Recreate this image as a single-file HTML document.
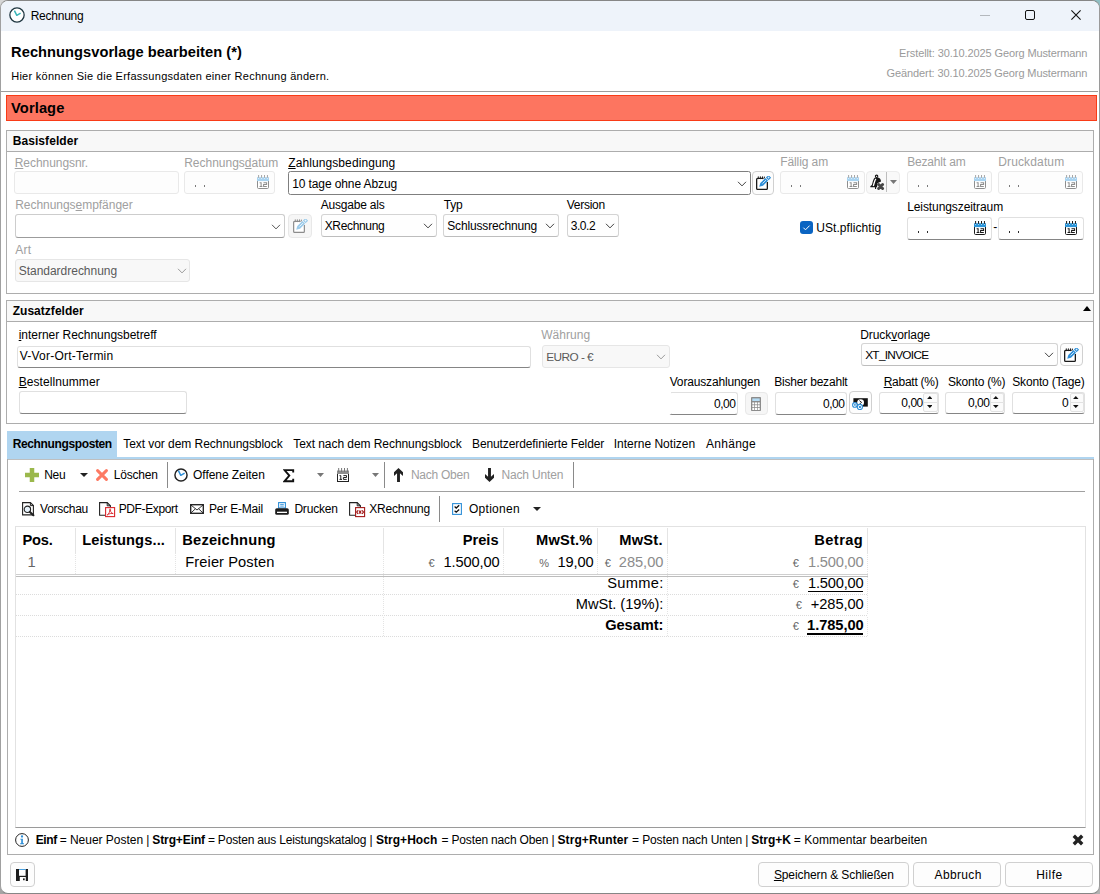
<!DOCTYPE html>
<html><head><meta charset="utf-8"><title>Rechnung</title>
<style>
html,body{margin:0;padding:0;}
body{width:1100px;height:894px;overflow:hidden;background:#8c8f90;font-family:"Liberation Sans", sans-serif;position:relative;}
#win{position:absolute;left:0;top:0;width:1100px;height:894px;box-sizing:border-box;border:1px solid #868686;border-left-color:#a0a0a0;border-right-color:#9a9a9a;border-radius:8px;background:#fff;overflow:hidden;}
#c{position:absolute;left:-1px;top:-1px;width:1100px;height:894px;}
#c div,#c svg{position:absolute;box-sizing:border-box;}
.t{position:absolute;white-space:nowrap;line-height:normal;font-family:"Liberation Sans", sans-serif;}
u{text-decoration-thickness:1px;text-underline-offset:1px;}
</style></head><body>
<div style="position:absolute;left:0;top:0;width:9px;height:9px;background:#d6d6d6"></div><div style="position:absolute;right:0;top:0;width:9px;height:9px;background:#8fbfc4"></div><div style="position:absolute;left:0;bottom:0;width:9px;height:9px;background:#a4a4a4"></div><div style="position:absolute;right:0;bottom:0;width:9px;height:9px;background:#b2b2b2"></div>
<div id="win"><div id="c">
<div style="left:0px;top:0px;width:1100px;height:31px;background:#eef3fa;"></div>
<svg style="left:9px;top:7px" width="16" height="16" viewBox="0 0 16 16"><circle cx="8.0" cy="8.0" r="7.1499999999999995" fill="#fff" stroke="#1f3640" stroke-width="1.3"/><path d="M5.4 3.5999999999999996 L7.8 8.3 L11.6 6.1" fill="none" stroke="#3ab5b8" stroke-width="1.5" stroke-linejoin="round"/></svg>
<div style="left:980px;top:15px;width:10px;height:1px;background:#b4b8bd;"></div>
<div style="left:1025px;top:10px;width:10px;height:10px;border:1px solid #111;border-radius:2px;"></div>
<svg style="left:1071px;top:10px" width="10" height="10" viewBox="0 0 10 10"><path d="M0.4 0.4 L9.6 9.6 M9.6 0.4 L0.4 9.6" stroke="#111" stroke-width="1.1"/></svg>
<div style="left:1px;top:91px;width:1097px;height:1px;background:#9d9d9d;"></div>
<div style="left:6px;top:95px;width:1091px;height:26px;border:1px solid #f93b17;background:#fd7560;"></div>
<div style="left:6px;top:130px;width:1088px;height:164px;border:1px solid #adadad;background:#fff;"></div>
<div style="left:7px;top:131px;width:1086px;height:20px;background:#f8f8f8;"></div>
<div style="left:7px;top:151px;width:1086px;height:1px;background:#adadad;"></div>
<div style="left:14px;top:171px;width:165px;height:23px;border:1px solid #e9e9e9;border-radius:3px;background:#fdfdfd;"></div>
<div style="left:184px;top:171px;width:91px;height:23px;border:1px solid #e9e9e9;border-radius:3px;background:#fdfdfd;"></div>
<svg style="left:257px;top:175px" width="12" height="14" viewBox="0 0 12 14"><path d="M0.5 6 V12.4 Q0.5 13.5 1.6 13.5 H10.4 Q11.5 13.5 11.5 12.4 V6" fill="#fff" stroke="#8e8e8e" stroke-width="1"/><rect x="0" y="2.2" width="12" height="3.9" fill="#a9d3f0"/><path d="M1.6 0 V2.9 M4.55 0 V2.9 M7.5 0 V2.9 M10.45 0 V2.9" stroke="#a6a6a6" stroke-width="1"/><path d="M1.6 2.9 V3.9 M4.55 2.9 V3.9 M7.5 2.9 V3.9 M10.45 2.9 V3.9" stroke="#fff" stroke-width="0.9" opacity="0.75"/><path d="M2.6 7.7 H4.1 V11.4 M2.6 11.5 H5.4 M6.5 7.7 H9.6 V9.5 H6.6 V11.5 H9.8" fill="none" stroke="#8e8e8e" stroke-width="1.05"/></svg>
<div style="left:288px;top:171px;width:463px;height:24px;border:1px solid #7f7f7f;border-radius:2.5px;background:#fff;"></div>
<svg style="left:737px;top:181px" width="10" height="6" viewBox="0 0 10 6"><path d="M1 0.8 L5 4.9 L9 0.8" fill="none" stroke="#444" stroke-width="1"/></svg>
<div style="left:752px;top:171px;width:22px;height:24px;border:1px solid #d0d0d0;border-radius:4px;background:#fdfdfd;"></div>
<svg style="left:756px;top:176.2px" width="16" height="15" viewBox="0 0 16 15"><path d="M7.6 2.4 H1.6 Q0.65 2.4 0.65 3.4 V12.4 Q0.65 13.3 1.6 13.3 H10.4 Q11.35 13.3 11.35 12.4 V5.9" fill="#fff" stroke="#1a1a1a" stroke-width="1.3"/><path d="M2.3 0.4 V3.1 M4.4 0.4 V3.1 M6.5 0.4 V3.1 M8.4 0.6 V2.4" stroke="#1a1a1a" stroke-width="0.95"/><g transform="translate(3.2 10.7) rotate(-44.2)"><path d="M0 0 L3.4 -1.9 H10.5 V1.9 H3.4 Z" fill="#2f8fd8"/><rect x="11.2" y="-1.9" width="3.6" height="3.8" fill="#2f8fd8"/><rect x="12.3" y="-0.75" width="1.5" height="1.5" fill="#fff" opacity="0.85"/><path d="M4.6 0 H9.4" stroke="#fff" stroke-width="0.8" opacity="0.9"/></g></svg>
<div style="left:780px;top:171px;width:85px;height:23px;border:1px solid #e9e9e9;border-radius:3px;background:#fdfdfd;"></div>
<svg style="left:847px;top:175px" width="12" height="14" viewBox="0 0 12 14"><path d="M0.5 6 V12.4 Q0.5 13.5 1.6 13.5 H10.4 Q11.5 13.5 11.5 12.4 V6" fill="#fff" stroke="#8e8e8e" stroke-width="1"/><rect x="0" y="2.2" width="12" height="3.9" fill="#a9d3f0"/><path d="M1.6 0 V2.9 M4.55 0 V2.9 M7.5 0 V2.9 M10.45 0 V2.9" stroke="#a6a6a6" stroke-width="1"/><path d="M1.6 2.9 V3.9 M4.55 2.9 V3.9 M7.5 2.9 V3.9 M10.45 2.9 V3.9" stroke="#fff" stroke-width="0.9" opacity="0.75"/><path d="M2.6 7.7 H4.1 V11.4 M2.6 11.5 H5.4 M6.5 7.7 H9.6 V9.5 H6.6 V11.5 H9.8" fill="none" stroke="#8e8e8e" stroke-width="1.05"/></svg>
<div style="left:866px;top:171px;width:34px;height:23px;border:1px solid #ececec;border-radius:4px;background:#f9f9f9;"></div>
<div style="left:886px;top:172px;width:1px;height:20px;background:#bdbdbd;"></div>
<svg style="left:870px;top:174px" width="15" height="17" viewBox="0 0 15 17"><path d="M5.1 3.5 C3.0 4.6 2.8 8.4 1.8 11 L0.3 12.2 V13.3 H7 L7.4 9.2 L11 7.6 C10.9 5.4 9.8 3.9 8 3.5 Z" fill="#161616"/><path d="M5.9 4.9 C4.5 6.4 4.3 9 3.3 12" stroke="#fff" stroke-width="1.35" fill="none"/><circle cx="6.6" cy="2.3" r="1.2" fill="#fff" stroke="#161616" stroke-width="1.1"/><rect x="5" y="13" width="1.1" height="2" fill="#161616"/><path d="M8.6 10.5 L12.6 14.5 M12.6 10.5 L8.6 14.5" stroke="#474747" stroke-width="3" stroke-linecap="round"/></svg>
<svg style="left:890px;top:180px" width="7" height="4" viewBox="0 0 7 4"><path d="M0 0 H7 L3.5 4 Z" fill="#777"/></svg>
<div style="left:907px;top:171px;width:85px;height:22px;border:1px solid #e9e9e9;border-radius:3px;background:#fdfdfd;"></div>
<svg style="left:974px;top:174.5px" width="12" height="14" viewBox="0 0 12 14"><path d="M0.5 6 V12.4 Q0.5 13.5 1.6 13.5 H10.4 Q11.5 13.5 11.5 12.4 V6" fill="#fff" stroke="#8e8e8e" stroke-width="1"/><rect x="0" y="2.2" width="12" height="3.9" fill="#a9d3f0"/><path d="M1.6 0 V2.9 M4.55 0 V2.9 M7.5 0 V2.9 M10.45 0 V2.9" stroke="#a6a6a6" stroke-width="1"/><path d="M1.6 2.9 V3.9 M4.55 2.9 V3.9 M7.5 2.9 V3.9 M10.45 2.9 V3.9" stroke="#fff" stroke-width="0.9" opacity="0.75"/><path d="M2.6 7.7 H4.1 V11.4 M2.6 11.5 H5.4 M6.5 7.7 H9.6 V9.5 H6.6 V11.5 H9.8" fill="none" stroke="#8e8e8e" stroke-width="1.05"/></svg>
<div style="left:998px;top:171px;width:85px;height:23px;border:1px solid #e9e9e9;border-radius:3px;background:#fdfdfd;"></div>
<svg style="left:1065px;top:175px" width="12" height="14" viewBox="0 0 12 14"><path d="M0.5 6 V12.4 Q0.5 13.5 1.6 13.5 H10.4 Q11.5 13.5 11.5 12.4 V6" fill="#fff" stroke="#8e8e8e" stroke-width="1"/><rect x="0" y="2.2" width="12" height="3.9" fill="#a9d3f0"/><path d="M1.6 0 V2.9 M4.55 0 V2.9 M7.5 0 V2.9 M10.45 0 V2.9" stroke="#a6a6a6" stroke-width="1"/><path d="M1.6 2.9 V3.9 M4.55 2.9 V3.9 M7.5 2.9 V3.9 M10.45 2.9 V3.9" stroke="#fff" stroke-width="0.9" opacity="0.75"/><path d="M2.6 7.7 H4.1 V11.4 M2.6 11.5 H5.4 M6.5 7.7 H9.6 V9.5 H6.6 V11.5 H9.8" fill="none" stroke="#8e8e8e" stroke-width="1.05"/></svg>
<div style="left:195px;top:185px;width:1.2px;height:2px;background:#7a7a7a;"></div>
<div style="left:204px;top:185px;width:1.2px;height:2px;background:#7a7a7a;"></div>
<div style="left:791px;top:185px;width:1.2px;height:2px;background:#7a7a7a;"></div>
<div style="left:800px;top:185px;width:1.2px;height:2px;background:#7a7a7a;"></div>
<div style="left:918px;top:184.5px;width:1.2px;height:2px;background:#7a7a7a;"></div>
<div style="left:927px;top:184.5px;width:1.2px;height:2px;background:#7a7a7a;"></div>
<div style="left:1009px;top:185px;width:1.2px;height:2px;background:#7a7a7a;"></div>
<div style="left:1018px;top:185px;width:1.2px;height:2px;background:#7a7a7a;"></div>
<div style="left:15px;top:214px;width:270px;height:24px;border:1px solid #cdcdcd;border-bottom-color:#9c9c9c;border-radius:3px;background:#fff;"></div>
<svg style="left:271px;top:224px" width="10" height="6" viewBox="0 0 10 6"><path d="M1 0.8 L5 4.9 L9 0.8" fill="none" stroke="#555" stroke-width="1"/></svg>
<div style="left:288px;top:214px;width:24px;height:24px;border:1px solid #e8e8e8;border-radius:4px;background:#f6f6f6;"></div>
<svg style="left:293px;top:219px" width="16" height="15" viewBox="0 0 16 15"><path d="M7.6 2.4 H1.6 Q0.65 2.4 0.65 3.4 V12.4 Q0.65 13.3 1.6 13.3 H10.4 Q11.35 13.3 11.35 12.4 V5.9" fill="#fff" stroke="#8c8c8c" stroke-width="1.2"/><path d="M2.3 0.4 V3.1 M4.4 0.4 V3.1 M6.5 0.4 V3.1 M8.4 0.6 V2.4" stroke="#8c8c8c" stroke-width="0.95"/><g transform="translate(3.2 10.7) rotate(-44.2)"><path d="M0 0 L3.4 -1.9 H10.5 V1.9 H3.4 Z" fill="#9ccbea"/><rect x="11.2" y="-1.9" width="3.6" height="3.8" fill="#9ccbea"/><rect x="12.3" y="-0.75" width="1.5" height="1.5" fill="#fff" opacity="0.85"/><path d="M4.6 0 H9.4" stroke="#fff" stroke-width="0.8" opacity="0.9"/></g></svg>
<div style="left:321px;top:214px;width:116px;height:23px;border:1px solid #d4d4d4;border-bottom-color:#bdbdbd;border-radius:3px;background:#fefefe;"></div>
<svg style="left:423px;top:223px" width="10" height="6" viewBox="0 0 10 6"><path d="M1 0.8 L5 4.9 L9 0.8" fill="none" stroke="#444" stroke-width="1"/></svg>
<div style="left:443px;top:214px;width:116px;height:23px;border:1px solid #d4d4d4;border-bottom-color:#bdbdbd;border-radius:3px;background:#fefefe;"></div>
<svg style="left:545px;top:223px" width="10" height="6" viewBox="0 0 10 6"><path d="M1 0.8 L5 4.9 L9 0.8" fill="none" stroke="#444" stroke-width="1"/></svg>
<div style="left:567px;top:214px;width:52px;height:23px;border:1px solid #d4d4d4;border-bottom-color:#bdbdbd;border-radius:3px;background:#fefefe;"></div>
<svg style="left:605px;top:223px" width="10" height="6" viewBox="0 0 10 6"><path d="M1 0.8 L5 4.9 L9 0.8" fill="none" stroke="#444" stroke-width="1"/></svg>
<div style="left:800px;top:221px;width:13px;height:13px;background:#0a64c2;border-radius:3px;"></div>
<svg style="left:800px;top:221px" width="13" height="13" viewBox="0 0 13 13"><path d="M3.4 6.7 L5.5 8.8 L9.6 4.6" fill="none" stroke="#fff" stroke-width="1"/></svg>
<div style="left:907px;top:217px;width:85px;height:23px;border:1px solid #e0e0e0;border-bottom-color:#858585;border-radius:3px;background:#fff;"></div>
<svg style="left:974px;top:221px" width="12" height="14" viewBox="0 0 12 14"><path d="M0.5 6 V12.4 Q0.5 13.5 1.6 13.5 H10.4 Q11.5 13.5 11.5 12.4 V6" fill="#fff" stroke="#1a1a1a" stroke-width="1"/><rect x="0" y="2.2" width="12" height="3.9" fill="#2b95d9"/><path d="M1.6 0 V2.9 M4.55 0 V2.9 M7.5 0 V2.9 M10.45 0 V2.9" stroke="#1a1a1a" stroke-width="1"/><path d="M1.6 2.9 V3.9 M4.55 2.9 V3.9 M7.5 2.9 V3.9 M10.45 2.9 V3.9" stroke="#fff" stroke-width="0.9" opacity="0.75"/><path d="M2.6 7.7 H4.1 V11.4 M2.6 11.5 H5.4 M6.5 7.7 H9.6 V9.5 H6.6 V11.5 H9.8" fill="none" stroke="#1a1a1a" stroke-width="1.05"/></svg>
<div style="left:998px;top:217px;width:86px;height:23px;border:1px solid #e0e0e0;border-bottom-color:#858585;border-radius:3px;background:#fff;"></div>
<svg style="left:1065px;top:221px" width="12" height="14" viewBox="0 0 12 14"><path d="M0.5 6 V12.4 Q0.5 13.5 1.6 13.5 H10.4 Q11.5 13.5 11.5 12.4 V6" fill="#fff" stroke="#1a1a1a" stroke-width="1"/><rect x="0" y="2.2" width="12" height="3.9" fill="#2b95d9"/><path d="M1.6 0 V2.9 M4.55 0 V2.9 M7.5 0 V2.9 M10.45 0 V2.9" stroke="#1a1a1a" stroke-width="1"/><path d="M1.6 2.9 V3.9 M4.55 2.9 V3.9 M7.5 2.9 V3.9 M10.45 2.9 V3.9" stroke="#fff" stroke-width="0.9" opacity="0.75"/><path d="M2.6 7.7 H4.1 V11.4 M2.6 11.5 H5.4 M6.5 7.7 H9.6 V9.5 H6.6 V11.5 H9.8" fill="none" stroke="#1a1a1a" stroke-width="1.05"/></svg>
<div style="left:918px;top:231px;width:1.2px;height:2px;background:#2a2a2a;"></div>
<div style="left:927px;top:231px;width:1.2px;height:2px;background:#2a2a2a;"></div>
<div style="left:1009px;top:231px;width:1.2px;height:2px;background:#2a2a2a;"></div>
<div style="left:1018px;top:231px;width:1.2px;height:2px;background:#2a2a2a;"></div>
<div style="left:15px;top:259px;width:175px;height:23px;border:1px solid #e6e6e6;border-radius:3px;background:#f8f8f8;"></div>
<svg style="left:177px;top:268px" width="10" height="6" viewBox="0 0 10 6"><path d="M1 0.8 L5 4.9 L9 0.8" fill="none" stroke="#9a9a9a" stroke-width="1"/></svg>
<div style="left:6px;top:300px;width:1088px;height:124px;border:1px solid #adadad;background:#fff;"></div>
<div style="left:7px;top:301px;width:1086px;height:20px;background:#f8f8f8;"></div>
<div style="left:7px;top:321px;width:1086px;height:1px;background:#adadad;"></div>
<svg style="left:1083px;top:306px" width="8" height="5" viewBox="0 0 8 5"><path d="M0 5 H8 L4.0 0 Z" fill="#000"/></svg>
<div style="left:17px;top:346px;width:514px;height:22px;border:1px solid #e0e0e0;border-bottom-color:#858585;border-radius:3px;background:#fff;"></div>
<div style="left:542px;top:345px;width:128px;height:23px;border:1px solid #e6e6e6;border-radius:3px;background:#f8f8f8;"></div>
<svg style="left:656px;top:354px" width="10" height="6" viewBox="0 0 10 6"><path d="M1 0.8 L5 4.9 L9 0.8" fill="none" stroke="#9a9a9a" stroke-width="1"/></svg>
<div style="left:861px;top:343px;width:197px;height:23px;border:1px solid #d4d4d4;border-bottom-color:#bdbdbd;border-radius:3px;background:#fefefe;"></div>
<svg style="left:1044px;top:352px" width="10" height="6" viewBox="0 0 10 6"><path d="M1 0.8 L5 4.9 L9 0.8" fill="none" stroke="#444" stroke-width="1"/></svg>
<div style="left:1060px;top:343px;width:23px;height:23px;border:1px solid #d0d0d0;border-radius:4px;background:#fdfdfd;"></div>
<svg style="left:1064px;top:348.4px" width="16" height="15" viewBox="0 0 16 15"><path d="M7.6 2.4 H1.6 Q0.65 2.4 0.65 3.4 V12.4 Q0.65 13.3 1.6 13.3 H10.4 Q11.35 13.3 11.35 12.4 V5.9" fill="#fff" stroke="#1a1a1a" stroke-width="1.3"/><path d="M2.3 0.4 V3.1 M4.4 0.4 V3.1 M6.5 0.4 V3.1 M8.4 0.6 V2.4" stroke="#1a1a1a" stroke-width="0.95"/><g transform="translate(3.2 10.7) rotate(-44.2)"><path d="M0 0 L3.4 -1.9 H10.5 V1.9 H3.4 Z" fill="#2f8fd8"/><rect x="11.2" y="-1.9" width="3.6" height="3.8" fill="#2f8fd8"/><rect x="12.3" y="-0.75" width="1.5" height="1.5" fill="#fff" opacity="0.85"/><path d="M4.6 0 H9.4" stroke="#fff" stroke-width="0.8" opacity="0.9"/></g></svg>
<div style="left:19px;top:391px;width:168px;height:23px;border:1px solid #e0e0e0;border-bottom-color:#858585;border-radius:3px;background:#fff;"></div>
<div style="left:669px;top:392px;width:69px;height:23px;border:1px solid #e0e0e0;border-bottom-color:#858585;border-radius:3px;background:#fff;"></div>
<div style="left:669px;top:392px;width:2px;height:22px;background:#fff;"></div>
<div style="left:745px;top:392px;width:23px;height:23px;border:1px solid #e8e8e8;border-radius:4px;background:#f6f6f6;"></div>
<svg style="left:751px;top:397px" width="10" height="14" viewBox="0 0 10 14"><rect x="0" y="0" width="10" height="14" rx="0.8" fill="#8c8c8c"/><rect x="1.3" y="1.4" width="7.4" height="2.6" fill="#b4dbf4"/><rect x="1.3" y="5.4" width="2" height="2" fill="#fff"/><rect x="4.0" y="5.4" width="2" height="2" fill="#fff"/><rect x="6.7" y="5.4" width="2" height="2" fill="#fff"/><rect x="1.3" y="8.2" width="2" height="2" fill="#fff"/><rect x="4.0" y="8.2" width="2" height="2" fill="#fff"/><rect x="6.7" y="8.2" width="2" height="2" fill="#fff"/><rect x="1.3" y="11.0" width="2" height="2" fill="#fff"/><rect x="4.0" y="11.0" width="2" height="2" fill="#fff"/><rect x="6.7" y="11.0" width="2" height="2" fill="#fff"/></svg>
<div style="left:775px;top:392px;width:72px;height:23px;border:1px solid #e0e0e0;border-bottom-color:#858585;border-radius:3px;background:#fff;"></div>
<div style="left:849px;top:391px;width:23px;height:23px;border:1px solid #d0d0d0;border-radius:4px;background:#fdfdfd;"></div>
<svg style="left:852px;top:398px" width="16" height="12" viewBox="0 0 16 12"><rect x="1.4" y="0.2" width="14.4" height="8.4" fill="#111"/><ellipse cx="8.6" cy="4.4" rx="3.4" ry="3.2" fill="#fff"/><path d="M7.4 2.6 L9.6 4.4 L7.4 6.2" stroke="#111" stroke-width="0.9" fill="none"/><circle cx="2.9" cy="6.9" r="2.3" fill="#fff" stroke="#2f8fd8" stroke-width="1.1"/><rect x="2.1" y="6.1" width="1.6" height="1.6" fill="#2f8fd8"/><circle cx="7.9" cy="9" r="2.6" fill="#fff" stroke="#2f8fd8" stroke-width="1.1"/><rect x="6.9" y="8" width="2" height="2" fill="#2f8fd8"/></svg>
<div style="left:879px;top:392px;width:60px;height:22px;border:1px solid #e0e0e0;border-bottom-color:#858585;border-radius:3px;background:#fff;"></div>
<div style="left:945px;top:392px;width:60px;height:22px;border:1px solid #e0e0e0;border-bottom-color:#858585;border-radius:3px;background:#fff;"></div>
<div style="left:1012px;top:392px;width:73px;height:22px;border:1px solid #e0e0e0;border-bottom-color:#858585;border-radius:3px;background:#fff;"></div>
<div style="left:923px;top:393px;width:14.5px;height:10px;border:1px solid #e2e2e2;background:#fbfbfb;border-radius:2px 2px 0 0;"></div>
<div style="left:923px;top:402px;width:14.5px;height:10px;border:1px solid #e2e2e2;background:#fbfbfb;border-radius:0 0 2px 2px;"></div>
<svg style="left:926.9px;top:395.7px" width="5.6" height="3.1" viewBox="0 0 5.6 3.1"><path d="M0 3.1 H5.6 L2.8 0 Z" fill="#111"/></svg>
<svg style="left:926.9px;top:405.3px" width="5.6" height="3.1" viewBox="0 0 5.6 3.1"><path d="M0 0 H5.6 L2.8 3.1 Z" fill="#111"/></svg>
<div style="left:989.5px;top:393px;width:14.5px;height:10px;border:1px solid #e2e2e2;background:#fbfbfb;border-radius:2px 2px 0 0;"></div>
<div style="left:989.5px;top:402px;width:14.5px;height:10px;border:1px solid #e2e2e2;background:#fbfbfb;border-radius:0 0 2px 2px;"></div>
<svg style="left:993.4px;top:395.7px" width="5.6" height="3.1" viewBox="0 0 5.6 3.1"><path d="M0 3.1 H5.6 L2.8 0 Z" fill="#111"/></svg>
<svg style="left:993.4px;top:405.3px" width="5.6" height="3.1" viewBox="0 0 5.6 3.1"><path d="M0 0 H5.6 L2.8 3.1 Z" fill="#111"/></svg>
<div style="left:1069.5px;top:393px;width:14.5px;height:10px;border:1px solid #e2e2e2;background:#fbfbfb;border-radius:2px 2px 0 0;"></div>
<div style="left:1069.5px;top:402px;width:14.5px;height:10px;border:1px solid #e2e2e2;background:#fbfbfb;border-radius:0 0 2px 2px;"></div>
<svg style="left:1073.4px;top:395.7px" width="5.6" height="3.1" viewBox="0 0 5.6 3.1"><path d="M0 3.1 H5.6 L2.8 0 Z" fill="#111"/></svg>
<svg style="left:1073.4px;top:405.3px" width="5.6" height="3.1" viewBox="0 0 5.6 3.1"><path d="M0 0 H5.6 L2.8 3.1 Z" fill="#111"/></svg>
<div style="left:7px;top:431px;width:110px;height:26px;background:#b0d5f0;"></div>
<div style="left:7px;top:457px;width:1087px;height:2px;background:#b0d5f0;"></div>
<div style="left:7px;top:459px;width:1087px;height:1px;background:#bfbfbf;"></div>
<div style="left:7px;top:459px;width:1px;height:396px;background:#adadad;"></div>
<div style="left:1093px;top:459px;width:1px;height:396px;background:#adadad;"></div>
<div style="left:7px;top:854px;width:1087px;height:1px;background:#adadad;"></div>
<svg style="left:25px;top:468px" width="14" height="14" viewBox="0 0 14 14"><path d="M7 0 V14 M0 7 H14" stroke="#9bb84c" stroke-width="4.5" stroke-linecap="butt" fill="none" transform="translate(0,0)"/></svg>
<svg style="left:96px;top:469px" width="12" height="12" viewBox="0 0 12 12"><path d="M1.6 1.6 L10.4 10.4 M10.4 1.6 L1.6 10.4" stroke="#fd7a63" stroke-width="3" stroke-linecap="round" fill="none"/></svg>
<svg style="left:80px;top:473px" width="8" height="4" viewBox="0 0 8 4"><path d="M0 0 H8 L4.0 4 Z" fill="#222"/></svg>
<div style="left:167px;top:462px;width:1px;height:26px;background:#8a8a8a;"></div>
<svg style="left:174px;top:468px" width="14" height="14" viewBox="0 0 14 14"><circle cx="7.0" cy="7.0" r="6.075" fill="#fff" stroke="#222" stroke-width="1.45"/><path d="M4.4 2.5999999999999996 L6.8 7.3 L10.6 5.1" fill="none" stroke="#2f8fd8" stroke-width="1.5" stroke-linejoin="round"/></svg>
<svg style="left:282.5px;top:468.5px" width="12" height="14" viewBox="0 0 12 14"><path d="M10.2 3.4 V1.1 H1.5 L6.3 6.6 L1.5 12.3 H10.2 V9.7" fill="none" stroke="#111" stroke-width="1.9" stroke-linejoin="miter"/></svg>
<svg style="left:317px;top:473px" width="7" height="4" viewBox="0 0 7 4"><path d="M0 0 H7 L3.5 4 Z" fill="#777"/></svg>
<svg style="left:337px;top:468px" width="12" height="14" viewBox="0 0 12 14"><rect x="0.5" y="5.5" width="11" height="8" fill="#fff" stroke="#222" stroke-width="1"/><rect x="0" y="2.5" width="12" height="3.5" fill="#8e8e8e"/><path d="M1.7 0 V4 M4.6 0 V4 M7.5 0 V4 M10.4 0 V4" stroke="#777" stroke-width="1"/><path d="M2.5 7.6 H3.8 V11.4 M2.5 11.4 H5 M6.4 7.6 H9.5 V9.5 H6.4 V11.4 H9.7" fill="none" stroke="#222" stroke-width="1"/></svg>
<svg style="left:372px;top:473px" width="7" height="4" viewBox="0 0 7 4"><path d="M0 0 H7 L3.5 4 Z" fill="#777"/></svg>
<div style="left:384px;top:462px;width:1px;height:26px;background:#8a8a8a;"></div>
<svg style="left:394px;top:468px" width="9" height="14" viewBox="0 0 9 14"><g><path d="M4.5 0 L9 4.3 V8 L5.95 5.35 V13.9 H3.05 V5.35 L0 8 V4.3 Z" fill="#222"/></g></svg>
<svg style="left:485px;top:468px" width="9" height="14" viewBox="0 0 9 14"><g transform="rotate(180 4.5 7)"><path d="M4.5 0 L9 4.3 V8 L5.95 5.35 V13.9 H3.05 V5.35 L0 8 V4.3 Z" fill="#222"/></g></svg>
<div style="left:573px;top:462px;width:1px;height:26px;background:#8a8a8a;"></div>
<div style="left:19px;top:491px;width:1066px;height:1px;background:#a0a0a0;"></div>
<svg style="left:21.7px;top:502px" width="13" height="15" viewBox="0 0 13 15"><path d="M0.6 0.6 H8.4 L11.4 3.6 V12.9 H0.6 Z" fill="#fff" stroke="#222" stroke-width="1.1"/><path d="M8.4 0.6 V3.6 H11.4" fill="none" stroke="#222" stroke-width="1"/><circle cx="5.4" cy="7.3" r="3.2" fill="#e6f2fb" stroke="#222" stroke-width="1.1"/><path d="M7.9 9.9 L11.4 13.2" stroke="#222" stroke-width="2.1" stroke-linecap="round"/></svg>
<svg style="left:98.7px;top:502px" width="17" height="16" viewBox="0 0 17 16"><path d="M0.6 0.6 H8.2 L11.4 3.8 V13.2 H0.6 Z" fill="#fff" stroke="#222" stroke-width="1.1"/><path d="M8.2 0.6 V3.8 H11.4" fill="none" stroke="#222" stroke-width="1"/><rect x="6.6" y="5.6" width="9" height="9" fill="#fff" stroke="#d9262c" stroke-width="1.1"/><path d="M8.2 13 C10 11.8 11 9.6 10.7 7.4 C10.5 6.6 11.8 6.6 11.5 7.8 C11.2 9.8 12.6 11.4 14.2 11.6 C13 11 10 11.6 8.2 13 Z" fill="none" stroke="#d9262c" stroke-width="0.9"/></svg>
<svg style="left:190px;top:504px" width="14" height="10" viewBox="0 0 14 10"><rect x="0.7" y="0.7" width="12.6" height="8.6" fill="#fff" stroke="#222" stroke-width="1.35"/><path d="M0.8 0.9 L7 6 L13.2 0.9 M0.8 9.1 L5.4 4.8 M13.2 9.1 L8.6 4.8" fill="none" stroke="#222" stroke-width="0.9"/></svg>
<svg style="left:275px;top:502px" width="14" height="13" viewBox="0 0 14 13"><rect x="3.6" y="0.6" width="6.8" height="5.4" fill="#fff" stroke="#2f8fd8" stroke-width="1.1"/><path d="M5.2 2.4 H8.8 M5.2 4.1 H8.8" stroke="#2f8fd8" stroke-width="0.9"/><rect x="0.2" y="6.2" width="13.6" height="6.6" rx="1.6" fill="#1c1c1c"/><rect x="2" y="9.7" width="10" height="1.3" fill="#fff"/></svg>
<svg style="left:348.7px;top:502px" width="17" height="16" viewBox="0 0 17 16"><path d="M0.6 0.6 H8.2 L11.4 3.8 V13.2 H0.6 Z" fill="#fff" stroke="#222" stroke-width="1.1"/><path d="M8.2 0.6 V3.8 H11.4" fill="none" stroke="#222" stroke-width="1"/><rect x="6.6" y="5.6" width="9" height="9" fill="#fff" stroke="#a31919" stroke-width="1.1"/><path d="M9 8.3 L7.7 10.1 L9 11.9 M13.2 8.3 L14.5 10.1 L13.2 11.9 M9.9 8.5 L12.3 11.7 M12.3 8.5 L9.9 11.7" fill="none" stroke="#a31919" stroke-width="1.15"/></svg>
<svg style="left:452px;top:503px" width="10" height="12" viewBox="0 0 10 12"><rect x="0.6" y="0.6" width="8.8" height="10.8" fill="#fff" stroke="#2f8fd8" stroke-width="1.1"/><path d="M2.6 3.6 L4.2 5 L7.2 2.2 M2.6 7.8 L4.2 9.2 L7.2 6.4" fill="none" stroke="#111" stroke-width="1.3"/></svg>
<div style="left:439px;top:496px;width:1px;height:26px;background:#8a8a8a;"></div>
<svg style="left:533px;top:507px" width="8" height="4" viewBox="0 0 8 4"><path d="M0 0 H8 L4.0 4 Z" fill="#222"/></svg>
<div style="left:15px;top:526px;width:1071px;height:302px;border:1px solid #e2e2e2;border-bottom-color:#9a9a9a;background:#fff;"></div>
<div style="left:75px;top:528px;width:1px;height:25px;background:#e4e4e4;"></div>
<div style="left:75px;top:553px;width:1px;height:21px;background:repeating-linear-gradient(to bottom,#e4e4e4 0 1px,#fff 1px 2px);"></div>
<div style="left:175px;top:528px;width:1px;height:25px;background:#e4e4e4;"></div>
<div style="left:175px;top:553px;width:1px;height:21px;background:repeating-linear-gradient(to bottom,#e4e4e4 0 1px,#fff 1px 2px);"></div>
<div style="left:383px;top:528px;width:1px;height:25px;background:#e4e4e4;"></div>
<div style="left:383px;top:553px;width:1px;height:84px;background:repeating-linear-gradient(to bottom,#e4e4e4 0 1px,#fff 1px 2px);"></div>
<div style="left:503px;top:528px;width:1px;height:25px;background:#e4e4e4;"></div>
<div style="left:503px;top:553px;width:1px;height:21px;background:repeating-linear-gradient(to bottom,#e4e4e4 0 1px,#fff 1px 2px);"></div>
<div style="left:597px;top:528px;width:1px;height:25px;background:#e4e4e4;"></div>
<div style="left:597px;top:553px;width:1px;height:21px;background:repeating-linear-gradient(to bottom,#e4e4e4 0 1px,#fff 1px 2px);"></div>
<div style="left:667px;top:528px;width:1px;height:25px;background:#e4e4e4;"></div>
<div style="left:667px;top:553px;width:1px;height:84px;background:repeating-linear-gradient(to bottom,#e4e4e4 0 1px,#fff 1px 2px);"></div>
<div style="left:867px;top:528px;width:1px;height:25px;background:#e4e4e4;"></div>
<div style="left:867px;top:553px;width:1px;height:84px;background:repeating-linear-gradient(to bottom,#e4e4e4 0 1px,#fff 1px 2px);"></div>
<div style="left:16px;top:574px;width:852px;height:1px;background:#cfcfcf;"></div>
<div style="left:16px;top:576px;width:852px;height:1px;background:#bdbdbd;"></div>
<div style="left:16px;top:594px;width:852px;height:1px;background:repeating-linear-gradient(to right,#dcdcdc 0 1px,#fff 1px 2px);"></div>
<div style="left:16px;top:615px;width:852px;height:1px;background:repeating-linear-gradient(to right,#dcdcdc 0 1px,#fff 1px 2px);"></div>
<div style="left:16px;top:636px;width:852px;height:1px;background:repeating-linear-gradient(to right,#dcdcdc 0 1px,#fff 1px 2px);"></div>
<div style="left:808px;top:591px;width:55px;height:1px;background:#000;"></div>
<div style="left:807px;top:633px;width:56px;height:2px;background:#000;"></div>
<svg style="left:15px;top:833px" width="14" height="14" viewBox="0 0 14 14"><circle cx="7" cy="7" r="6.4" fill="#fff" stroke="#222" stroke-width="1"/><circle cx="7" cy="3.5" r="1.15" fill="#2f8fd8"/><path d="M5.2 5.7 H7.9 V10.3 H9 V11.2 H5.1 V10.3 H6.2 V6.6 H5.2 Z" fill="#2f8fd8"/></svg>
<svg style="left:1072px;top:834px" width="12" height="12" viewBox="0 0 12 12"><path d="M1.8 1.8 L10.2 10.2 M10.2 1.8 L1.8 10.2" stroke="#222" stroke-width="3.4" stroke-linecap="butt" fill="none"/></svg>
<div style="left:10px;top:862px;width:25px;height:25px;border:1px solid #d0d0d0;border-radius:4px;background:#fdfdfd;"></div>
<svg style="left:16px;top:869px" width="12" height="12" viewBox="0 0 12 12"><rect x="0" y="0" width="12" height="12" fill="#1c1c1c"/><rect x="3" y="0" width="6.6" height="6.8" fill="#fdfdfd"/><rect x="3" y="0" width="6.6" height="0.9" fill="#3a9ae0"/><rect x="3.8" y="8" width="6" height="4" fill="#fdfdfd"/><rect x="7" y="9.4" width="1.7" height="1.8" fill="#1c1c1c"/></svg>
<div style="left:758px;top:862px;width:151px;height:25px;border:1px solid #d0d0d0;border-radius:4px;background:#fdfdfd;"></div>
<div style="left:913px;top:862px;width:88px;height:25px;border:1px solid #d0d0d0;border-radius:4px;background:#fdfdfd;"></div>
<div style="left:1005px;top:862px;width:88px;height:25px;border:1px solid #d0d0d0;border-radius:4px;background:#fdfdfd;"></div>
<span class="t" style="top:9px;font-size:12px;letter-spacing:-0.246px;left:30.7px;">Rechnung</span>
<span class="t" style="top:44px;font-size:14.67px;font-weight:700;letter-spacing:0.035px;left:11.1px;">Rechnungsvorlage bearbeiten (*)</span>
<span class="t" style="top:70px;font-size:11px;letter-spacing:0.267px;left:11.2px;">Hier können Sie die Erfassungsdaten einer Rechnung ändern.</span>
<span class="t" style="top:47px;font-size:11px;color:#9a9a9a;letter-spacing:-0.116px;left:899.07px;">Erstellt: 30.10.2025 Georg Mustermann</span>
<span class="t" style="top:67px;font-size:11px;color:#9a9a9a;letter-spacing:-0.11px;left:886.6px;">Geändert: 30.10.2025 Georg Mustermann</span>
<span class="t" style="top:100px;font-size:14.67px;font-weight:700;letter-spacing:0.092px;left:11.1px;">Vorlage</span>
<span class="t" style="top:134px;font-size:12px;font-weight:700;letter-spacing:0.08px;left:12.7px;">Basisfelder</span>
<span class="t" style="top:156px;font-size:12px;color:#a0a0a0;letter-spacing:-0.051px;left:14.7px;"><u>R</u>echnungsnr.</span>
<span class="t" style="top:156px;font-size:12px;color:#a0a0a0;letter-spacing:-0.007px;left:184.2px;">Rechnungs<u>d</u>atum</span>
<span class="t" style="top:156px;font-size:12px;letter-spacing:0.098px;left:288.2px;"><u>Z</u>ahlungsbedingung</span>
<span class="t" style="top:177px;font-size:12px;letter-spacing:-0.104px;left:292.2px;">10 tage ohne Abzug</span>
<span class="t" style="top:155px;font-size:12px;color:#a0a0a0;letter-spacing:-0.086px;left:780.2px;">Fällig am</span>
<span class="t" style="top:155px;font-size:12px;color:#a0a0a0;letter-spacing:-0.17px;left:907.2px;">Bezahlt am</span>
<span class="t" style="top:155px;font-size:12px;color:#a0a0a0;letter-spacing:0.146px;left:998.2px;">Druckdatum</span>
<span class="t" style="top:198px;font-size:12px;color:#a0a0a0;letter-spacing:-0.036px;left:15.2px;">Rechnungs<u>e</u>mpfänger</span>
<span class="t" style="top:198px;font-size:12px;letter-spacing:-0.205px;left:320.7px;">Ausgabe als</span>
<span class="t" style="top:219px;font-size:12px;letter-spacing:-0.34px;left:324.7px;">XRechnung</span>
<span class="t" style="top:198px;font-size:12px;letter-spacing:-0.172px;left:443.7px;">Typ</span>
<span class="t" style="top:219px;font-size:12px;letter-spacing:-0.147px;left:447.2px;">Schlussrechnung</span>
<span class="t" style="top:198px;font-size:12px;letter-spacing:-0.255px;left:566.7px;">Version</span>
<span class="t" style="top:219px;font-size:12px;letter-spacing:-0.426px;left:570.7px;">3.0.2</span>
<span class="t" style="top:221px;font-size:12px;letter-spacing:0.081px;left:816.2px;">USt.pflichtig</span>
<span class="t" style="top:200px;font-size:12px;letter-spacing:-0.087px;left:907.2px;">Leistungszeitraum</span>
<span class="t" style="top:220px;font-size:12px;left:993.2px;">-</span>
<span class="t" style="top:243px;font-size:12px;color:#a0a0a0;letter-spacing:0.328px;left:15.2px;">Art</span>
<span class="t" style="top:264px;font-size:12px;color:#5a5a5a;letter-spacing:-0.017px;left:18.7px;">Standardrechnung</span>
<span class="t" style="top:304px;font-size:12px;font-weight:700;letter-spacing:0.028px;left:12.7px;">Zusatzfelder</span>
<span class="t" style="top:328px;font-size:12px;letter-spacing:-0.023px;left:18.7px;"><u>i</u>nterner Rechnungsbetreff</span>
<span class="t" style="top:349px;font-size:12px;letter-spacing:0.232px;left:19.7px;">V-Vor-Ort-Termin</span>
<span class="t" style="top:328px;font-size:12px;color:#a0a0a0;letter-spacing:0.049px;left:541.2px;">Währung</span>
<span class="t" style="top:350px;font-size:11.8px;color:#5a5a5a;letter-spacing:-0.522px;left:546.2px;">EURO - €</span>
<span class="t" style="top:328px;font-size:12px;letter-spacing:-0.064px;left:860.2px;">Druck<u>v</u>orlage</span>
<span class="t" style="top:348px;font-size:11.8px;letter-spacing:-0.686px;left:865.2px;">XT_INVOICE</span>
<span class="t" style="top:375px;font-size:12px;letter-spacing:0.079px;left:18.7px;"><u>B</u>estellnummer</span>
<span class="t" style="top:375px;font-size:12px;letter-spacing:-0.161px;left:669.7px;">Vorauszahlungen</span>
<span class="t" style="top:397px;font-size:12px;letter-spacing:-0.453px;left:714.0px;">0,00</span>
<span class="t" style="top:375px;font-size:12px;letter-spacing:-0.196px;left:774.2px;">Bisher bezahlt</span>
<span class="t" style="top:397px;font-size:12px;letter-spacing:-0.453px;left:823.0px;">0,00</span>
<span class="t" style="top:375px;font-size:12px;letter-spacing:-0.262px;left:883.7px;"><u>R</u>abatt (%)</span>
<span class="t" style="top:396px;font-size:12px;letter-spacing:-0.453px;left:901.3px;">0,00</span>
<span class="t" style="top:375px;font-size:12px;letter-spacing:-0.207px;left:948.0px;">Skonto (%)</span>
<span class="t" style="top:396px;font-size:12px;letter-spacing:-0.453px;left:968.0px;">0,00</span>
<span class="t" style="top:375px;font-size:12px;letter-spacing:-0.185px;left:1012.3px;">Skonto (Tage)</span>
<span class="t" style="top:396px;font-size:12px;left:1062.01px;">0</span>
<span class="t" style="top:437px;font-size:12px;font-weight:700;letter-spacing:-0.369px;left:12.7px;">Rechnungsposten</span>
<span class="t" style="top:437px;font-size:12px;letter-spacing:-0.048px;left:123.2px;">Text vor dem Rechnungsblock</span>
<span class="t" style="top:437px;font-size:12px;letter-spacing:-0.06px;left:293.2px;">Text nach dem Rechnungsblock</span>
<span class="t" style="top:437px;font-size:12px;letter-spacing:-0.102px;left:472.0px;">Benutzerdefinierte Felder</span>
<span class="t" style="top:437px;font-size:12px;letter-spacing:0.008px;left:613.7px;">Interne Notizen</span>
<span class="t" style="top:437px;font-size:12px;letter-spacing:0.259px;left:706.1px;">Anhänge</span>
<span class="t" style="top:468px;font-size:12px;letter-spacing:-0.258px;left:44.2px;">Neu</span>
<span class="t" style="top:468px;font-size:12px;letter-spacing:-0.179px;left:113.7px;">Löschen</span>
<span class="t" style="top:468px;font-size:12px;letter-spacing:-0.058px;left:193.1px;">Offene Zeiten</span>
<span class="t" style="top:468px;font-size:12px;color:#a0a0a0;letter-spacing:-0.25px;left:410.9px;">Nach Oben</span>
<span class="t" style="top:468px;font-size:12px;color:#a0a0a0;letter-spacing:-0.153px;left:501.4px;">Nach Unten</span>
<span class="t" style="top:502px;font-size:12px;letter-spacing:-0.264px;left:40.1px;">Vorschau</span>
<span class="t" style="top:502px;font-size:12px;letter-spacing:-0.376px;left:118.7px;">PDF-Export</span>
<span class="t" style="top:502px;font-size:12px;letter-spacing:-0.224px;left:209.1px;">Per E-Mail</span>
<span class="t" style="top:502px;font-size:12px;letter-spacing:-0.198px;left:294.4px;">Drucken</span>
<span class="t" style="top:502px;font-size:12px;letter-spacing:-0.215px;left:369.2px;">XRechnung</span>
<span class="t" style="top:502px;font-size:12px;letter-spacing:0.271px;left:469.0px;">Optionen</span>
<span class="t" style="top:532px;font-size:14.67px;font-weight:700;letter-spacing:-0.144px;left:22.4px;">Pos.</span>
<span class="t" style="top:532px;font-size:14.67px;font-weight:700;letter-spacing:0.117px;left:82.2px;">Leistungs...</span>
<span class="t" style="top:532px;font-size:14.67px;font-weight:700;letter-spacing:0.202px;left:182.3px;">Bezeichnung</span>
<span class="t" style="top:532px;font-size:14.67px;font-weight:700;left:462.74px;">Preis</span>
<span class="t" style="top:532px;font-size:14.67px;font-weight:700;letter-spacing:0.169px;left:536.08px;">MwSt.%</span>
<span class="t" style="top:532px;font-size:14.67px;font-weight:700;letter-spacing:0.22px;left:619.28px;">MwSt.</span>
<span class="t" style="top:532px;font-size:14.67px;font-weight:700;letter-spacing:0.417px;left:814.28px;">Betrag</span>
<span class="t" style="top:554px;font-size:14.67px;color:#666;left:27.5px;">1</span>
<span class="t" style="top:554px;font-size:14.67px;letter-spacing:0.087px;left:185.3px;">Freier Posten</span>
<span class="t" style="top:557px;font-size:11px;color:#666;left:428.5px;">€</span>
<span class="t" style="top:554px;font-size:14.67px;letter-spacing:-0.12px;left:443.48px;">1.500,00</span>
<span class="t" style="top:557px;font-size:11px;color:#666;left:539.3px;">%</span>
<span class="t" style="top:554px;font-size:14.67px;letter-spacing:-0.116px;left:557.48px;">19,00</span>
<span class="t" style="top:557px;font-size:11px;color:#666;left:604.7px;">€</span>
<span class="t" style="top:554px;font-size:14.67px;color:#8c8c8c;letter-spacing:-0.041px;left:618.78px;">285,00</span>
<span class="t" style="top:557px;font-size:11px;color:#666;left:792.7px;">€</span>
<span class="t" style="top:554px;font-size:14.67px;color:#8c8c8c;letter-spacing:-0.191px;left:807.97px;">1.500,00</span>
<span class="t" style="top:575px;font-size:14.67px;letter-spacing:0.329px;left:607.18px;">Summe:</span>
<span class="t" style="top:596px;font-size:14.67px;letter-spacing:-0.03px;left:575.78px;">MwSt. (19%):</span>
<span class="t" style="top:617px;font-size:14.67px;font-weight:700;letter-spacing:-0.072px;left:605.18px;">Gesamt:</span>
<span class="t" style="top:578px;font-size:11px;color:#666;left:792.7px;">€</span>
<span class="t" style="top:599px;font-size:11px;color:#666;left:795.7px;">€</span>
<span class="t" style="top:620px;font-size:11px;color:#666;left:792.7px;">€</span>
<span class="t" style="top:575px;font-size:14.67px;letter-spacing:-0.191px;left:807.97px;">1.500,00</span>
<span class="t" style="top:596px;font-size:14.67px;letter-spacing:-0.078px;left:810.78px;">+285,00</span>
<span class="t" style="top:617px;font-size:14.67px;font-weight:700;letter-spacing:-0.063px;left:807.08px;">1.785,00</span>
<span class="t" style="top:833px;font-size:12px;font-weight:700;letter-spacing:-0.391px;left:35.7px;">Einf</span>
<span class="t" style="top:833px;font-size:12px;letter-spacing:-0.025px;left:59.7px;">= Neuer Posten |</span>
<span class="t" style="top:833px;font-size:12px;font-weight:700;letter-spacing:-0.109px;left:152.3px;">Strg+Einf</span>
<span class="t" style="top:833px;font-size:12px;letter-spacing:-0.184px;left:207.9px;">= Posten aus Leistungskatalog |</span>
<span class="t" style="top:833px;font-size:12px;font-weight:700;letter-spacing:0.048px;left:375.9px;">Strg+Hoch</span>
<span class="t" style="top:833px;font-size:12px;letter-spacing:-0.163px;left:441.5px;">= Posten nach Oben |</span>
<span class="t" style="top:833px;font-size:12px;font-weight:700;letter-spacing:0.121px;left:557.4px;">Strg+Runter</span>
<span class="t" style="top:833px;font-size:12px;letter-spacing:-0.129px;left:632.1px;">= Posten nach Unten |</span>
<span class="t" style="top:833px;font-size:12px;font-weight:700;letter-spacing:0.022px;left:751.2px;">Strg+K</span>
<span class="t" style="top:833px;font-size:12px;letter-spacing:0.051px;left:793.7px;">= Kommentar bearbeiten</span>
<span class="t" style="top:868px;font-size:12px;letter-spacing:-0.105px;left:773.9px;"><u>S</u>peichern &amp; Schließen</span>
<span class="t" style="top:868px;font-size:12px;letter-spacing:0.349px;left:934.6px;">Abbruch</span>
<span class="t" style="top:868px;font-size:12px;letter-spacing:0.496px;left:1036.2px;">Hilfe</span>
</div></div>
</body></html>
